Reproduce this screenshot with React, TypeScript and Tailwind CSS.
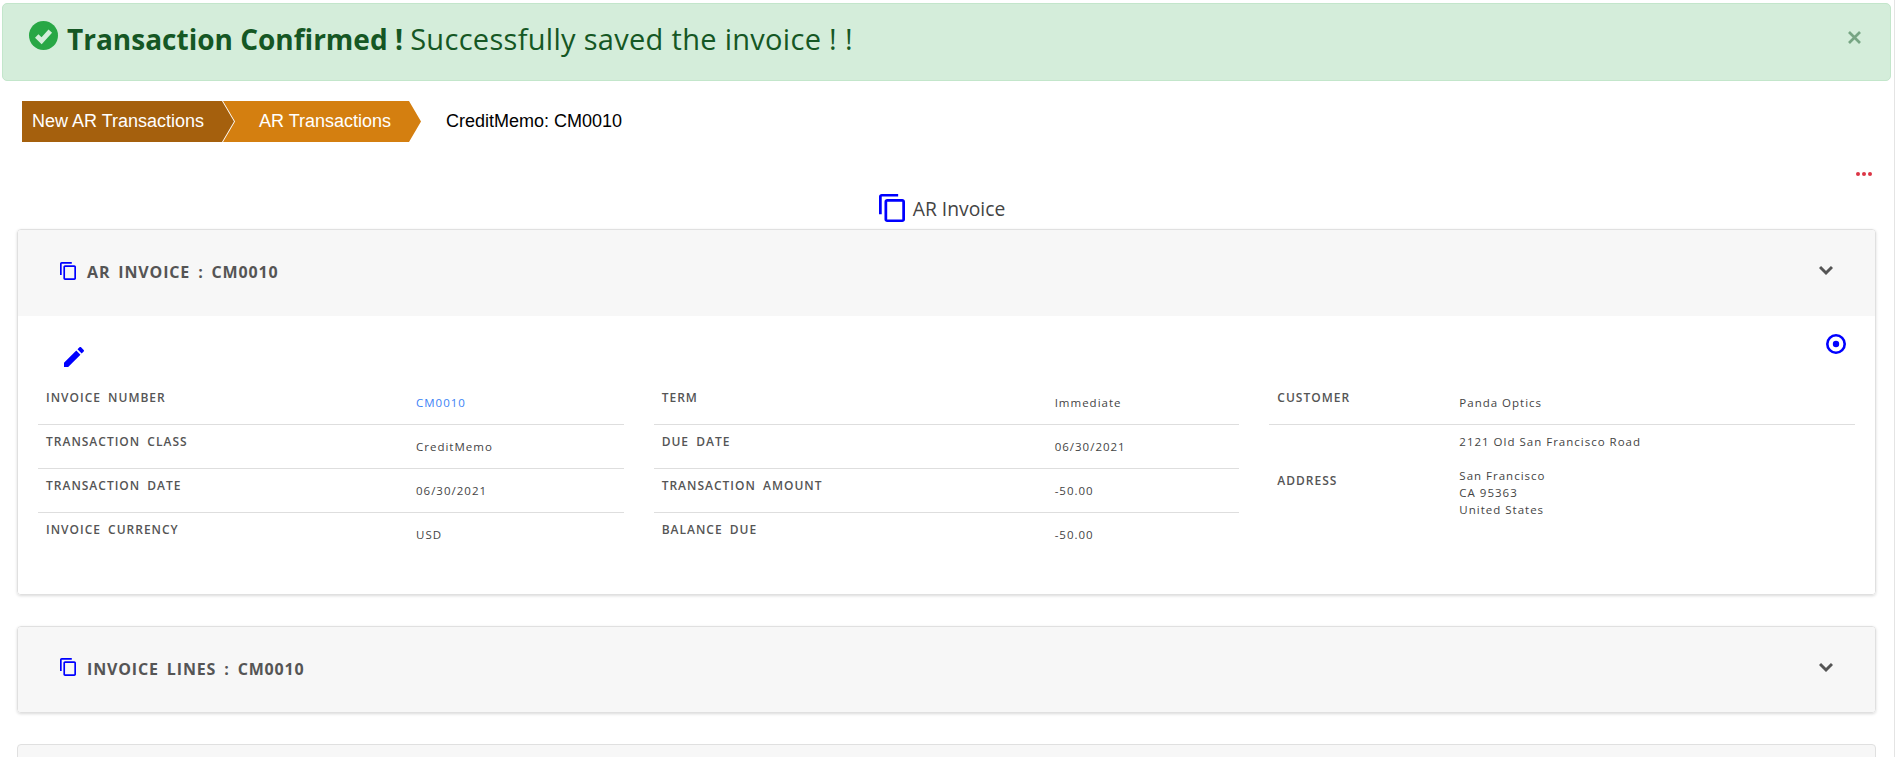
import React from "react";

const sans = "font-['Open_Sans','Noto_Sans',sans-serif]";
const labelCls = "text-[12px] font-semibold tracking-[1px] [word-spacing:3px] text-[#555555]";
const valueCls = "text-[11.5px] tracking-[1px]";

function CopyIcon({ className }: { className: string }) {
  return (
    <svg viewBox="2 1 19 22" className={className} fill="#0000ff" preserveAspectRatio="none">
      <path d="M16 1H4c-1.1 0-2 .9-2 2v14h2V3h12V1zm3 4H8c-1.1 0-2 .9-2 2v14c0 1.1.9 2 2 2h11c1.1 0 2-.9 2-2V7c0-1.1-.9-2-2-2zm0 16H8V7h11v14z" />
    </svg>
  );
}

function Chevron() {
  return (
    <svg viewBox="0 0 14 11" className="w-[14px] h-[11px]" fill="none" stroke="#555555" strokeWidth="3">
      <path d="M1 2l6 6 6-6" />
    </svg>
  );
}

function CardHeader({ title, height }: { title: string; height: string }) {
  return (
    <div className={`${height} bg-[#f7f7f7] flex items-center justify-between pl-[42px] pr-[42px]`}>
      <div className="flex items-center gap-[11px] -mt-[2px]">
        <CopyIcon className="w-[16px] h-[18px] -mt-[3px]" />
        <span className="text-[16px] font-bold tracking-[0.85px] [word-spacing:3px] text-[#555555] whitespace-nowrap">{title}</span>
      </div>
      <div className="-mt-[5px]">
        <Chevron />
      </div>
    </div>
  );
}

function Row({ label, value, last, link, labelWidth }: { label: string; value: string; last?: boolean; link?: boolean; labelWidth: string }) {
  return (
    <div className={`h-[44px] flex px-[8px] ${last ? "" : "border-b border-[#dedede]"}`}>
      <div className={`${labelWidth} pt-[8px] uppercase ${labelCls}`}>{label}</div>
      <div className={`pt-[13px] ${valueCls} ${link ? "text-[#3b82f6]" : "text-[#444444]"}`}>{value}</div>
    </div>
  );
}

const col1 = [
  { label: "Invoice Number", value: "CM0010", link: true },
  { label: "Transaction Class", value: "CreditMemo" },
  { label: "Transaction Date", value: "06/30/2021" },
  { label: "Invoice Currency", value: "USD" },
];

const col2 = [
  { label: "Term", value: "Immediate" },
  { label: "Due Date", value: "06/30/2021" },
  { label: "Transaction Amount", value: "-50.00" },
  { label: "Balance Due", value: "-50.00" },
];

export default function App() {
  return (
    <div className={`${sans} relative w-full h-[757px] overflow-hidden bg-white`}>
      <div className="w-[1895px] h-full border-r border-[#e4e4e4] pt-[3px] pl-[2px]">
        {/* Alert */}
        <div className="w-[1889px] h-[78px] bg-[#d4edda] border border-[#c3e6cb] rounded-[5px] flex items-start justify-between pl-[26px] pr-[29px] pt-[17px] text-[#155724]">
          <div className="flex items-start gap-[9px]">
            <svg viewBox="0 0 30 30" className="w-[29px] h-[29px]">
              <circle cx="15" cy="15" r="15" fill="#28a745" />
              <path d="M8 15.5l5 5 9-10" fill="none" stroke="#d4edda" strokeWidth="5" />
            </svg>
            <div className="text-[28px] leading-[36px] whitespace-nowrap">
              <span className="font-bold">Transaction Confirmed !</span>{" "}
              <span className="text-[29px] tracking-[0.3px]">Successfully saved the invoice ! !</span>
            </div>
          </div>
          <svg viewBox="0 0 13 13" className="w-[13px] h-[13px] mt-[10px]" stroke="#77a583" strokeWidth="2.7">
            <path d="M1 1l11 11M12 1L1 12" />
          </svg>
        </div>

        {/* Breadcrumb */}
        <div className="flex items-center mt-[20px] ml-[20px] h-[41px] font-['Liberation_Sans',sans-serif] text-[18px] whitespace-nowrap">
          <div className="w-[212px] h-full bg-[#a5600d] text-white flex items-center pl-[10px] [clip-path:polygon(0_0,200px_0,100%_50%,200px_100%,0_100%)]">
            New AR Transactions
          </div>
          <div className="w-[198px] h-full -ml-[11px] bg-[#d47f10] text-white flex items-center pl-[36px] [clip-path:polygon(0_0,186px_0,100%_50%,186px_100%,0_100%,12px_50%)]">
            AR Transactions
          </div>
          <div className="ml-[25px] text-black">CreditMemo: CM0010</div>
        </div>

        {/* Actions */}
        <div className="flex justify-end pr-[22px] mt-[30px] h-[5px]">
          <span className="w-[4px] h-[4px] rounded-full bg-[#dc3545] mr-[2px]" />
          <span className="w-[4px] h-[4px] rounded-full bg-[#dc3545] mr-[2px]" />
          <span className="w-[4px] h-[4px] rounded-full bg-[#dc3545]" />
        </div>

        {/* Page title */}
        <div className="flex items-center justify-center gap-[8px] mt-[17px] h-[28px] pr-[12px]">
          <CopyIcon className="w-[26px] h-[28px]" />
          <span className="text-[19.3px] text-[#444444] mt-[3px]">AR Invoice</span>
        </div>

        {/* AR invoice card */}
        <div className="ml-[15px] w-[1859px] mt-[7px] border border-[#e0e0e0] rounded-[4px] shadow-[0_1px_3px_rgba(0,0,0,0.15)] overflow-hidden">
          <CardHeader title="AR INVOICE : CM0010" height="h-[86px]" />
          <div className="h-[278px] px-[20px] pt-[18px] bg-white">
            <div className="flex justify-between h-[44px] pl-[26px] pr-[9px]">
              <svg viewBox="3 3 18 18" className="w-[20px] h-[20px] mt-[13px]" fill="#0000ff">
                <path d="M3 17.25V21h3.75L17.81 9.94l-3.75-3.75L3 17.25zM20.71 7.04c.39-.39.39-1.02 0-1.41l-2.34-2.34c-.39-.39-1.02-.39-1.41 0l-1.83 1.83 3.75 3.75 1.83-1.83z" />
              </svg>
              <svg viewBox="0 0 20 20" className="w-[20px] h-[20px]" fill="none">
                <circle cx="10" cy="10" r="8.7" stroke="#0000ff" strokeWidth="2.6" />
                <circle cx="10" cy="10" r="3.2" fill="#0000ff" />
              </svg>
            </div>
            <div className="grid grid-cols-3 gap-[30px] mt-[3px]">
              <div>
                {col1.map((r, i) => (
                  <Row key={r.label} {...r} labelWidth="w-[370px]" last={i === col1.length - 1} />
                ))}
              </div>
              <div>
                {col2.map((r, i) => (
                  <Row key={r.label} {...r} labelWidth="w-[393px]" last={i === col2.length - 1} />
                ))}
              </div>
              <div>
                <div className="h-[44px] flex px-[8px] border-b border-[#dedede]">
                  <div className={`w-[182px] pt-[8px] ${labelCls}`}>CUSTOMER</div>
                  <div className={`pt-[13px] ${valueCls} text-[#444444]`}>Panda Optics</div>
                </div>
                <div className="flex px-[8px] items-center h-[104px]">
                  <div className={`w-[182px] mt-[8px] ${labelCls}`}>ADDRESS</div>
                  <div className={`-mt-[4px] leading-[17px] ${valueCls} text-[#444444]`}>
                    <div className="mb-[17px]">2121 Old San Francisco Road</div>
                    <div>San Francisco</div>
                    <div>CA 95363</div>
                    <div>United States</div>
                  </div>
                </div>
              </div>
            </div>
          </div>
        </div>

        {/* Invoice lines card */}
        <div className="ml-[15px] w-[1859px] mt-[31px] border border-[#e0e0e0] rounded-[4px] shadow-[0_1px_3px_rgba(0,0,0,0.15)] overflow-hidden">
          <CardHeader title="INVOICE LINES : CM0010" height="h-[85px]" />
        </div>

        {/* Next card, cut off by the fold */}
        <div className="ml-[15px] w-[1859px] mt-[31px] h-[86px] bg-[#f7f7f7] border border-[#e0e0e0] rounded-[4px]" />
      </div>
    </div>
  );
}
